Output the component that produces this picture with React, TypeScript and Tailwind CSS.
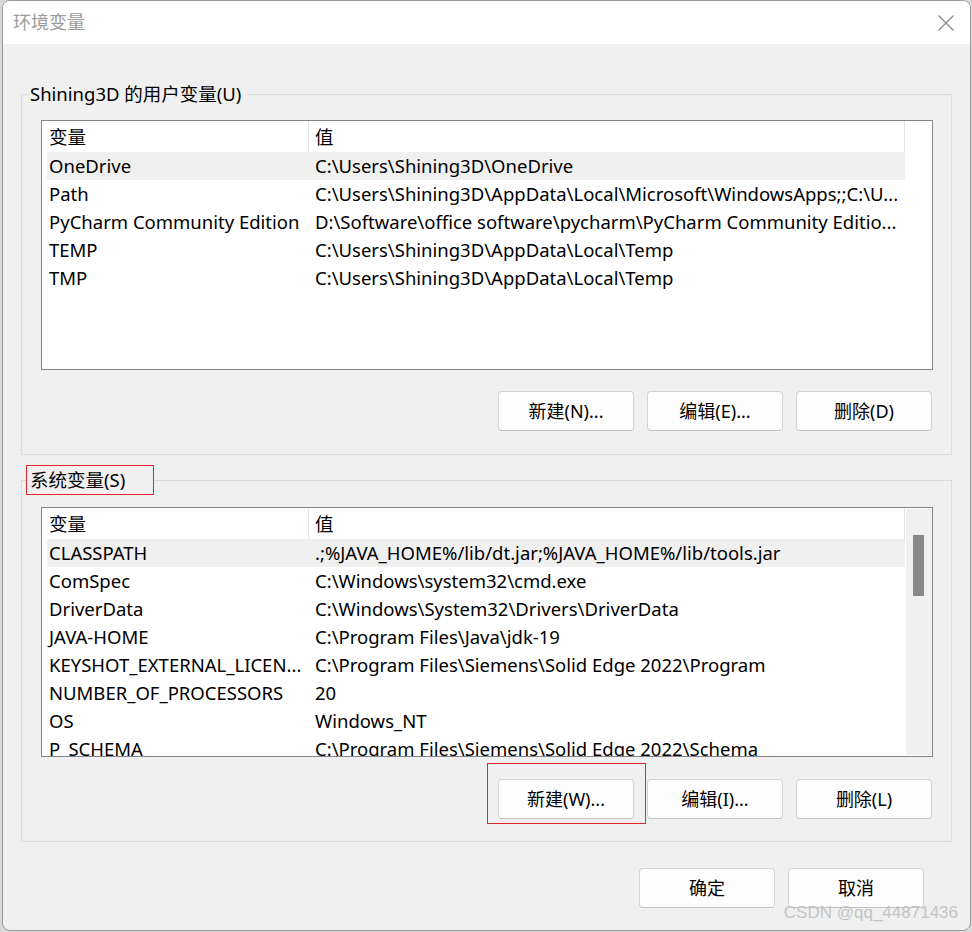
const font = { fontFamily: '"Noto Sans", "Noto Sans CJK SC", sans-serif' }

type Row = [string, string]

const userVars: Row[] = [
  ['OneDrive', 'C:\\Users\\Shining3D\\OneDrive'],
  ['Path', 'C:\\Users\\Shining3D\\AppData\\Local\\Microsoft\\WindowsApps;;C:\\U...'],
  ['PyCharm Community Edition', 'D:\\Software\\office software\\pycharm\\PyCharm Community Editio...'],
  ['TEMP', 'C:\\Users\\Shining3D\\AppData\\Local\\Temp'],
  ['TMP', 'C:\\Users\\Shining3D\\AppData\\Local\\Temp'],
]

const sysVars: Row[] = [
  ['CLASSPATH', '.;%JAVA_HOME%/lib/dt.jar;%JAVA_HOME%/lib/tools.jar'],
  ['ComSpec', 'C:\\Windows\\system32\\cmd.exe'],
  ['DriverData', 'C:\\Windows\\System32\\Drivers\\DriverData'],
  ['JAVA-HOME', 'C:\\Program Files\\Java\\jdk-19'],
  ['KEYSHOT_EXTERNAL_LICEN...', 'C:\\Program Files\\Siemens\\Solid Edge 2022\\Program'],
  ['NUMBER_OF_PROCESSORS', '20'],
  ['OS', 'Windows_NT'],
  ['P_SCHEMA', 'C:\\Program Files\\Siemens\\Solid Edge 2022\\Schema'],
]

function Button({ label }: { label: string }) {
  return (
    <button className="w-[136px] h-[40px] rounded-[4px] border border-[#d4d4d4] border-b-[#c2c2c2] bg-[#fdfdfd] text-[18px] text-black">
      {label}
    </button>
  )
}

function VarList({ rows, scroll }: { rows: Row[]; scroll?: boolean }) {
  return (
    <div className="relative h-[250px] border border-[#82878f] bg-white overflow-hidden">
      <div className="ml-[5px] w-[858px]">
        <div className="flex h-[31px] items-center">
          <div className="w-[262px] h-full border-r border-[#e5e5e5] pl-[2px] flex items-center">变量</div>
          <div className="w-[596px] h-full border-r border-[#e5e5e5] pl-[6px] flex items-center">值</div>
        </div>
        {rows.map(([name, value], i) => (
          <div key={name} className={`flex h-[28px] items-center whitespace-nowrap ${i === 0 ? 'bg-[#f0f0f0]' : ''}`}>
            <div className="w-[262px] pl-[2px] overflow-hidden">{name}</div>
            <div className="w-[596px] pl-[6px] overflow-hidden">{value}</div>
          </div>
        ))}
      </div>
      {scroll && (
        <div className="absolute right-0 top-[1px] bottom-[1px] w-[26px] bg-[#f0f0f0]">
          <div className="ml-[7px] mt-[26px] w-[11px] h-[61px] bg-[#888888]" />
        </div>
      )}
    </div>
  )
}

export default function App() {
  return (
    <div className="w-[972px] h-[932px] bg-[#d9d9d9] overflow-hidden text-[18.5px] text-black" style={font}>
      <div className="relative ml-[2px] w-[969px] h-[931px] rounded-[8px] border border-[#9a9a9a] bg-[#f0f0f0] overflow-hidden flex flex-col">
        {/* title bar */}
        <div className="h-[43px] bg-white flex items-center justify-between pl-[10px] pr-[15px]">
          <span className="text-[18px] text-[#9b9b9b]">环境变量</span>
          <svg width="18" height="18" viewBox="0 0 18 18" fill="none" stroke="#8a8a8a" strokeWidth="1.3">
            <path d="M1.5 1.5 L16.5 16.5 M16.5 1.5 L1.5 16.5" />
          </svg>
        </div>

        {/* user variables */}
        <fieldset className="mx-[18px] mt-[38px] border border-[#dcdcdc] pl-[19px] pr-[18px] pb-[23px]">
          <legend className="ml-[-12px] pl-[1px] pr-[5px] leading-[24px]">Shining3D 的用户变量(U)</legend>
          <div className="mt-[14px]">
            <VarList rows={userVars} />
          </div>
          <div className="mt-[21px] mr-[1px] flex justify-end gap-[13px]">
            <Button label="新建(N)..." />
            <Button label="编辑(E)..." />
            <Button label="删除(D)" />
          </div>
        </fieldset>

        {/* system variables */}
        <fieldset className="mx-[18px] mt-[10px] border border-[#dcdcdc] pl-[19px] pr-[18px] pb-[22px]">
          <legend className="ml-[-15px] w-[128px] h-[30px] border border-[#e0262e] pl-[3px] leading-[28px]">系统变量(S)</legend>
          <div className="mt-[12px]">
            <VarList rows={sysVars} scroll />
          </div>
          <div className="mt-[22px] mr-[1px] flex justify-end gap-[13px]">
            <div className="relative">
              <Button label="新建(W)..." />
              <span className="absolute left-[-11px] right-[-12px] top-[-16px] bottom-[-5px] border border-[#e0262e]" />
            </div>
            <Button label="编辑(I)..." />
            <Button label="删除(L)" />
          </div>
        </fieldset>

        {/* dialog buttons */}
        <div className="mt-[26px] mr-[46px] flex justify-end gap-[13px]">
          <Button label="确定" />
          <Button label="取消" />
        </div>

        <span
          className="absolute right-[12px] bottom-[5px] text-[17px] text-[#c4c4c4]"
          style={{ fontFamily: '"Liberation Sans", sans-serif' }}
        >
          CSDN @qq_44871436
        </span>
      </div>
    </div>
  )
}
